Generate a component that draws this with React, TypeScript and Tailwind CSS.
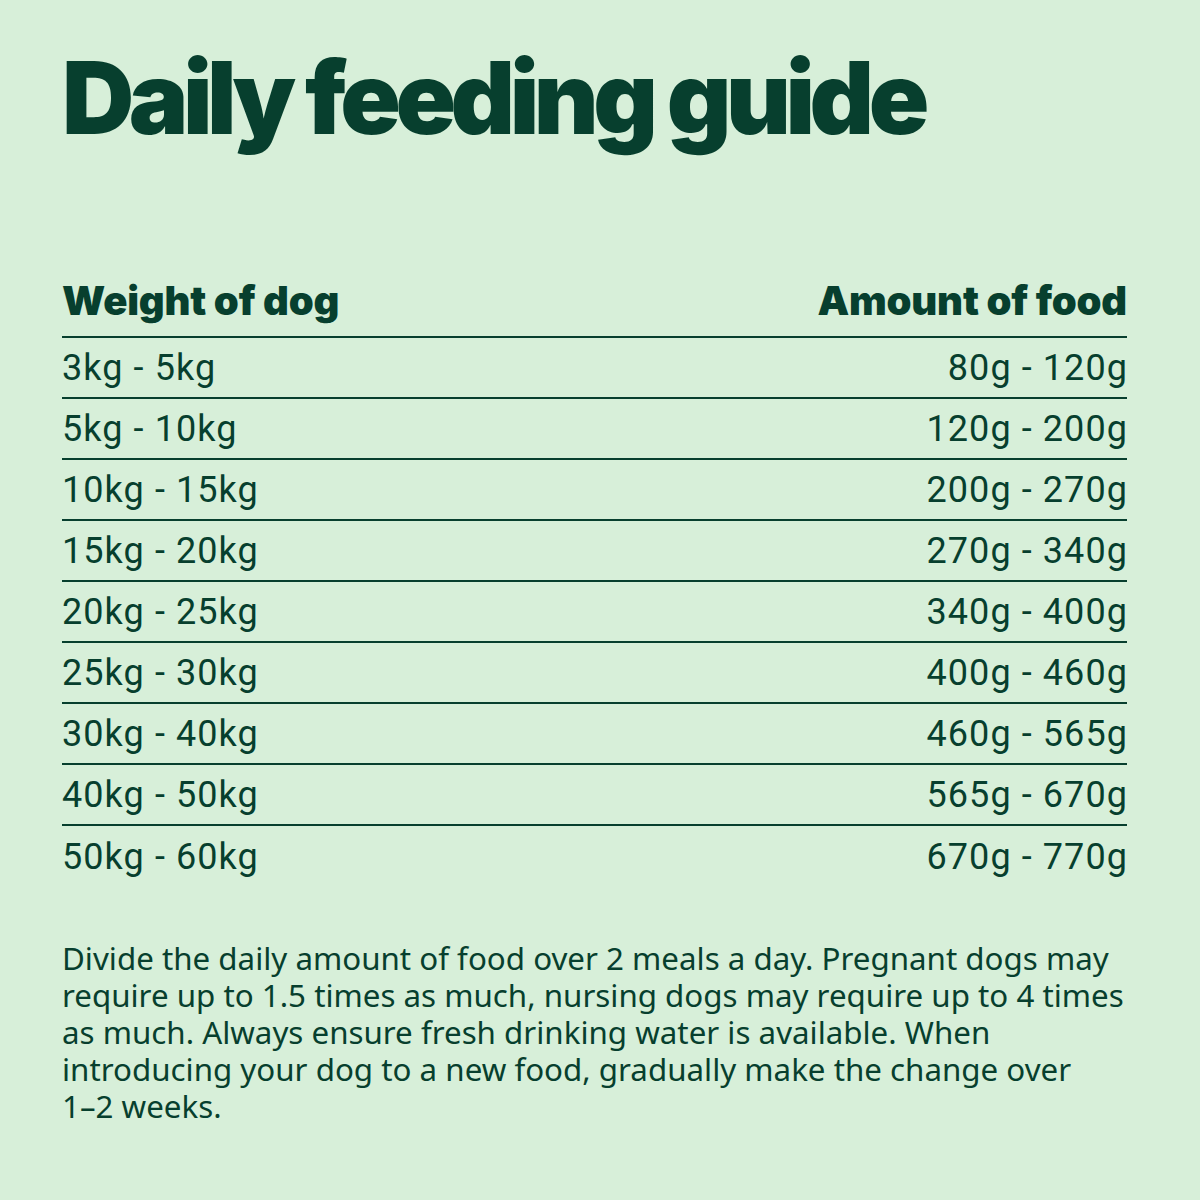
import React from "react";

const rows = [
  ["3kg - 5kg", "80g - 120g"],
  ["5kg - 10kg", "120g - 200g"],
  ["10kg - 15kg", "200g - 270g"],
  ["15kg - 20kg", "270g - 340g"],
  ["20kg - 25kg", "340g - 400g"],
  ["25kg - 30kg", "400g - 460g"],
  ["30kg - 40kg", "460g - 565g"],
  ["40kg - 50kg", "565g - 670g"],
  ["50kg - 60kg", "670g - 770g"],
];

const note = [
  "Divide the daily amount of food over 2 meals a day. Pregnant dogs may",
  "require up to 1.5 times as much, nursing dogs may require up to 4 times",
  "as much. Always ensure fresh drinking water is available. When",
  "introducing your dog to a new food, gradually make the change over",
  "1–2 weeks.",
];

export default function App() {
  return (
    <div
      className="w-[1200px] h-[1200px] bg-[#d7efd9] text-[#073f2e] pl-[62px] pr-[73px] pt-[38px]"
      style={{ fontFamily: "Inter, 'Noto Sans', sans-serif" }}
    >
      <h1 className="text-[100px] leading-[120px] font-black tracking-[-0.055em]">
        Daily feeding guide
      </h1>

      {/* table */}
      <div className="mt-[123px]">
        <div className="flex justify-between items-start h-[57px] border-b-2 border-[#073f2e] text-[40px] leading-[40px] font-black tracking-[-0.005em]">
          <span>Weight of dog</span>
          <span>Amount of food</span>
        </div>
        {rows.map(([weight, amount], i) => (
          <div
            key={weight}
            className={`flex justify-between items-center h-[61px] text-[36px] leading-[40px] tracking-[0.03em] ${
              i < rows.length - 1 ? "border-b-2 border-[#073f2e]" : ""
            }`}
            style={{ fontFamily: "Roboto, sans-serif" }}
          >
            <span>{weight}</span>
            <span className="-mr-[1px]">{amount}</span>
          </div>
        ))}
      </div>

      {/* note */}
      <div
        className="mt-[53px] text-[31.3px] leading-[37px] whitespace-nowrap"
        style={{ fontFamily: "'Noto Sans', sans-serif" }}
      >
        {note.map((line) => (
          <div key={line} className="h-[37px]">
            {line}
          </div>
        ))}
      </div>
    </div>
  );
}
